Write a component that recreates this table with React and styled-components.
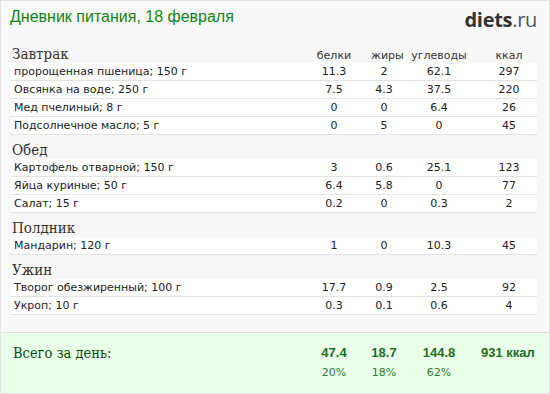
import React from 'react';
import styled, { createGlobalStyle } from 'styled-components';

const Global = createGlobalStyle`
  html, body { margin: 0; padding: 0; background: #ffffff; }
  * { box-sizing: border-box; }
`;

const COLS = '1fr 74px 26px 84px 56px';
const SERIF = '"DejaVu Serif Condensed", "DejaVu Serif", "Liberation Serif", serif';

const Frame = styled.div`
  width: 550px;
  height: 394px;
  border: 1px solid #e2e2e2;
  background: #f8f8f8;
  display: flex;
  flex-direction: column;
`;

const Header = styled.header`
  height: 38px;
  flex: none;
  display: flex;
  justify-content: space-between;
  align-items: flex-start;
  padding: 6px 12px 0 9px;
`;

const Title = styled.h1`
  margin: 0;
  font: normal 16px/20px "Liberation Sans", Arial, sans-serif;
  color: #128412;
`;

const Logo = styled.div`
  font: 20px/22px "Open Sans", "Liberation Sans", sans-serif;
  color: #555;
  letter-spacing: -0.3px;
  margin-top: 2px;
`;

const LogoBold = styled.span`
  font-weight: 700;
  color: #333;
`;

const Main = styled.main`
  flex: 1;
`;

const SectionHead = styled.div`
  display: grid;
  grid-template-columns: ${COLS};
  align-items: baseline;
  height: 24px;
  padding-top: 7px;
  margin: 0 12px 0 9px;
`;

const MealName = styled.div`
  font: 15px/17px ${SERIF};
  color: #333;
  padding-left: 2px;
`;

const ColLabel = styled.div`
  font: 11px/17px "DejaVu Sans", Verdana, sans-serif;
  color: #333;
  text-align: center;
  white-space: nowrap;
`;

const Row = styled.div`
  display: grid;
  grid-template-columns: ${COLS};
  align-items: center;
  height: 18px;
  margin: 0 12px 0 9px;
  background: #ffffff;
  border-bottom: 1px solid #e3e3e3;
  font: 11px/17px "DejaVu Sans", Verdana, sans-serif;
  color: #222;
`;

const Name = styled.div`
  padding-left: 4px;
  white-space: nowrap;
`;

const Num = styled.div`
  text-align: center;
  white-space: nowrap;
`;

const Totals = styled.footer`
  height: 61px;
  flex: none;
  border-top: 1px solid #dcdcdc;
  background: #eaffea;
  display: grid;
  grid-template-columns: ${COLS};
  grid-template-rows: 16px 16px;
  row-gap: 4px;
  align-items: center;
  padding: 12px 12px 0 9px;
`;

const TotalLabel = styled.div`
  font: 14.5px/16px ${SERIF};
  color: #0b4d0b;
  padding-left: 3px;
`;

const TotalValue = styled.div`
  font: bold 13px/16px "Liberation Sans", Arial, sans-serif;
  color: #236b23;
  text-align: center;
  white-space: nowrap;
  padding-right: ${p => (p.$kcal ? '10px' : '0')};
`;

const Percent = styled.div`
  font: 11px/16px "DejaVu Sans", Verdana, sans-serif;
  color: #2f7a2f;
  text-align: center;
  grid-row: 2;
  grid-column: ${p => p.$col};
`;

const meals = [
  {
    name: 'Завтрак',
    items: [
      ['пророщенная пшеница; 150 г', '11.3', '2', '62.1', '297'],
      ['Овсянка на воде; 250 г', '7.5', '4.3', '37.5', '220'],
      ['Мед пчелиный; 8 г', '0', '0', '6.4', '26'],
      ['Подсолнечное масло; 5 г', '0', '5', '0', '45'],
    ],
  },
  {
    name: 'Обед',
    items: [
      ['Картофель отварной; 150 г', '3', '0.6', '25.1', '123'],
      ['Яйца куриные; 50 г', '6.4', '5.8', '0', '77'],
      ['Салат; 15 г', '0.2', '0', '0.3', '2'],
    ],
  },
  {
    name: 'Полдник',
    items: [['Мандарин; 120 г', '1', '0', '10.3', '45']],
  },
  {
    name: 'Ужин',
    items: [
      ['Творог обезжиренный; 100 г', '17.7', '0.9', '2.5', '92'],
      ['Укроп; 10 г', '0.3', '0.1', '0.6', '4'],
    ],
  },
];

const labels = ['белки', 'жиры', 'углеводы', 'ккал'];

export default function App() {
  return (
    <>
      <Global />
      <Frame>
        <Header>
          <Title>Дневник питания, 18 февраля</Title>
          <Logo>
            <LogoBold>diets</LogoBold>.ru
          </Logo>
        </Header>
        <Main>
          {meals.map((meal, mi) => (
            <React.Fragment key={meal.name}>
              <SectionHead>
                <MealName>{meal.name}</MealName>
                {mi === 0 && labels.map(l => <ColLabel key={l}>{l}</ColLabel>)}
              </SectionHead>
              {meal.items.map(it => (
                <Row key={it[0]}>
                  <Name>{it[0]}</Name>
                  <Num>{it[1]}</Num>
                  <Num>{it[2]}</Num>
                  <Num>{it[3]}</Num>
                  <Num>{it[4]}</Num>
                </Row>
              ))}
            </React.Fragment>
          ))}
        </Main>
        <Totals>
          <TotalLabel>Всего за день:</TotalLabel>
          <TotalValue>47.4</TotalValue>
          <TotalValue>18.7</TotalValue>
          <TotalValue>144.8</TotalValue>
          <TotalValue $kcal>931 ккал</TotalValue>
          <Percent $col={2}>20%</Percent>
          <Percent $col={3}>18%</Percent>
          <Percent $col={4}>62%</Percent>
        </Totals>
      </Frame>
    </>
  );
}
